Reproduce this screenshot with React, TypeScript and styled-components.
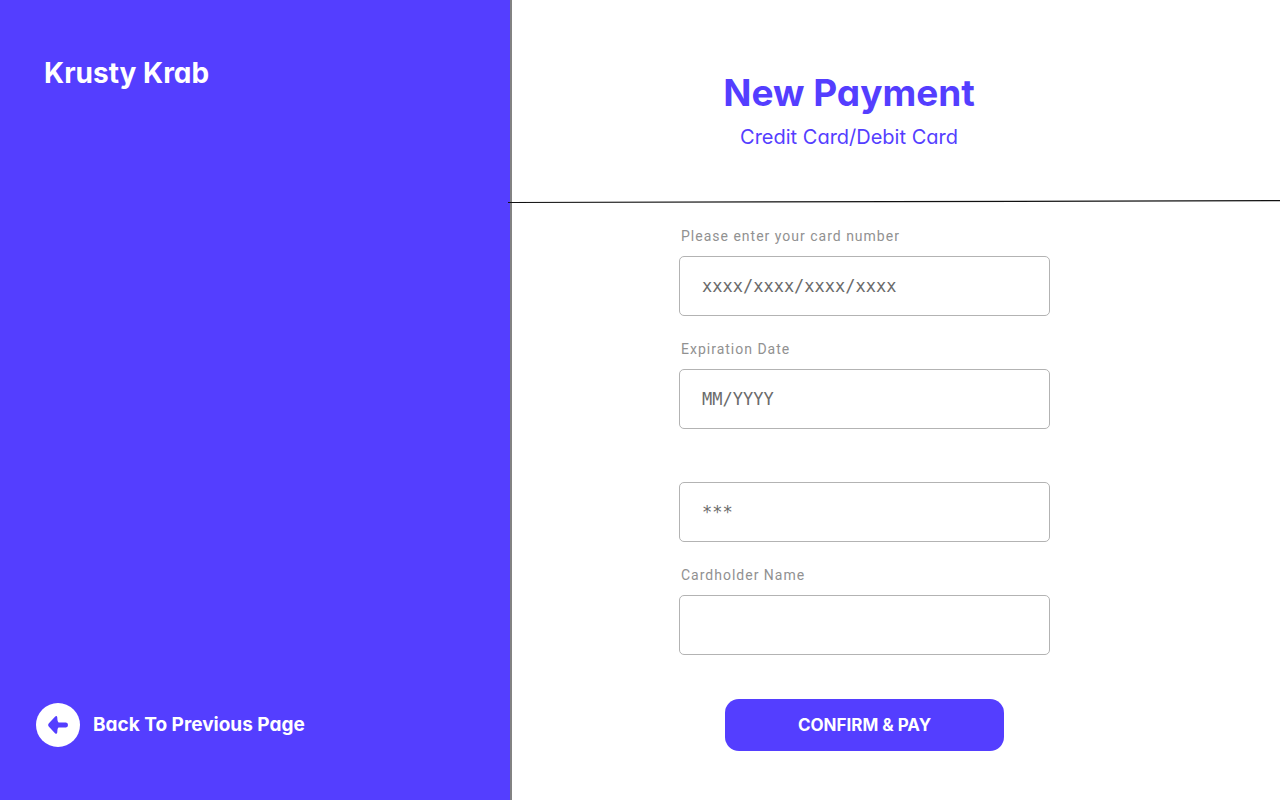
import React from "react";
import styled, { createGlobalStyle } from "styled-components";

const GlobalStyle = createGlobalStyle`
  *, *::before, *::after { box-sizing: border-box; }
  body { margin: 0; background: #fff; font-family: Inter, "Liberation Sans", sans-serif; }
`;

const brand = "#543eff";

const Page = styled.div`
  display: grid;
  grid-template-columns: 2fr 3fr;
  min-height: 100vh;
`;

const Sidebar = styled.aside`
  display: flex;
  flex-direction: column;
  justify-content: space-between;
  padding: 54px 36px 53px;
  background: ${brand};
  border-right: 2px solid #828282;
  color: #fff;
`;

const Logo = styled.div`
  padding-left: 8px;
  font-size: 28px;
  line-height: 38px;
  font-weight: 700;
  font-feature-settings: "cv11";
`;

const BackLink = styled.a`
  display: flex;
  align-items: center;
  gap: 13px;
  color: #fff;
  font-size: 19px;
  line-height: 28px;
  font-weight: 700;
  font-feature-settings: "cv11";
  text-decoration: none;
`;

const Content = styled.main`
  display: flex;
  flex-direction: column;
`;

const Header = styled.header`
  position: relative;
  height: 202px;
  padding: 67px 94px 0 0;
  color: ${brand};
  text-align: center;
  font-feature-settings: "cv11";
`;

const Title = styled.h1`
  margin: 0;
  font-size: 37px;
  line-height: 52px;
  font-weight: 700;
`;

const Subtitle = styled.p`
  margin: 4px 0 0;
  font-size: 20px;
  line-height: 28px;
`;

const Rule = styled.svg`
  position: absolute;
  left: -4px;
  bottom: -2px;
  width: calc(100% + 4px);
  height: 4px;
`;

const Form = styled.form`
  display: flex;
  flex-direction: column;
  align-items: center;
  gap: 23px;
  padding: 24px 63px 48px 0;
`;

const Field = styled.div`
  display: flex;
  flex-direction: column;
  gap: 10px;
  width: 371px;
  max-width: 100%;
`;

const Label = styled.label`
  height: 20px;
  padding-left: 2px;
  color: #919191;
  font-family: Roboto, sans-serif;
  font-size: 14px;
  line-height: 20px;
  letter-spacing: 1px;
`;

const Input = styled.input`
  width: 100%;
  height: 60px;
  padding: 0 22px;
  border: 1px solid #b3b3b3;
  border-radius: 5px;
  background: #fff;
  color: #6b6b6b;
  font-family: "DejaVu Sans Mono", monospace;
  font-size: 17px;
  &::placeholder { color: #6b6b6b; opacity: 1; }
`;

const PayButton = styled.button`
  width: 279px;
  height: 52px;
  margin-top: 21px;
  border: 0;
  border-radius: 14px;
  background: ${brand};
  color: #fff;
  font-family: inherit;
  font-size: 17px;
  font-weight: 700;
  cursor: pointer;
`;

const fields = [
  { id: "number", label: "Please enter your card number", placeholder: "xxxx/xxxx/xxxx/xxxx" },
  { id: "expiry", label: "Expiration Date", placeholder: "MM/YYYY" },
  { id: "cvv", label: "", placeholder: "***" },
  { id: "holder", label: "Cardholder Name", placeholder: "" },
];

export default function App() {
  return (
    <Page>
      <GlobalStyle />
      <Sidebar>
        <Logo>Krusty Krab</Logo>
        <BackLink href="#back">
          <svg width="44" height="44" viewBox="0 0 44 44" aria-hidden="true">
            <circle cx="22" cy="22" r="22" fill="#fff" />
            <path
              d="M12.7 20.4 19 13.7Q20.9 12.2 21.3 14.6Q21.3 18.6 22.6 19.4H30Q32 19.6 32 21.9T30 24.4H22.6Q21.3 25 21.3 29.2Q20.9 31.7 19 30.2L12.7 23.5Q11.4 22 12.7 20.4Z"
              fill={brand}
            />
          </svg>
          Back To Previous Page
        </BackLink>
      </Sidebar>
      <Content>
        <Header>
          <Title>New Payment</Title>
          <Subtitle>Credit Card/Debit Card</Subtitle>
          <Rule viewBox="0 0 772 4" preserveAspectRatio="none" aria-hidden="true">
            <line x1="0" y1="2.5" x2="772" y2="0.7" stroke="#111" strokeWidth="1.2" />
          </Rule>
        </Header>
        <Form onSubmit={(e) => e.preventDefault()}>
          {fields.map((f) => (
            <Field key={f.id}>
              <Label htmlFor={f.id}>{f.label}</Label>
              <Input id={f.id} placeholder={f.placeholder} />
            </Field>
          ))}
          <PayButton type="submit">CONFIRM &amp; PAY</PayButton>
        </Form>
      </Content>
    </Page>
  );
}
